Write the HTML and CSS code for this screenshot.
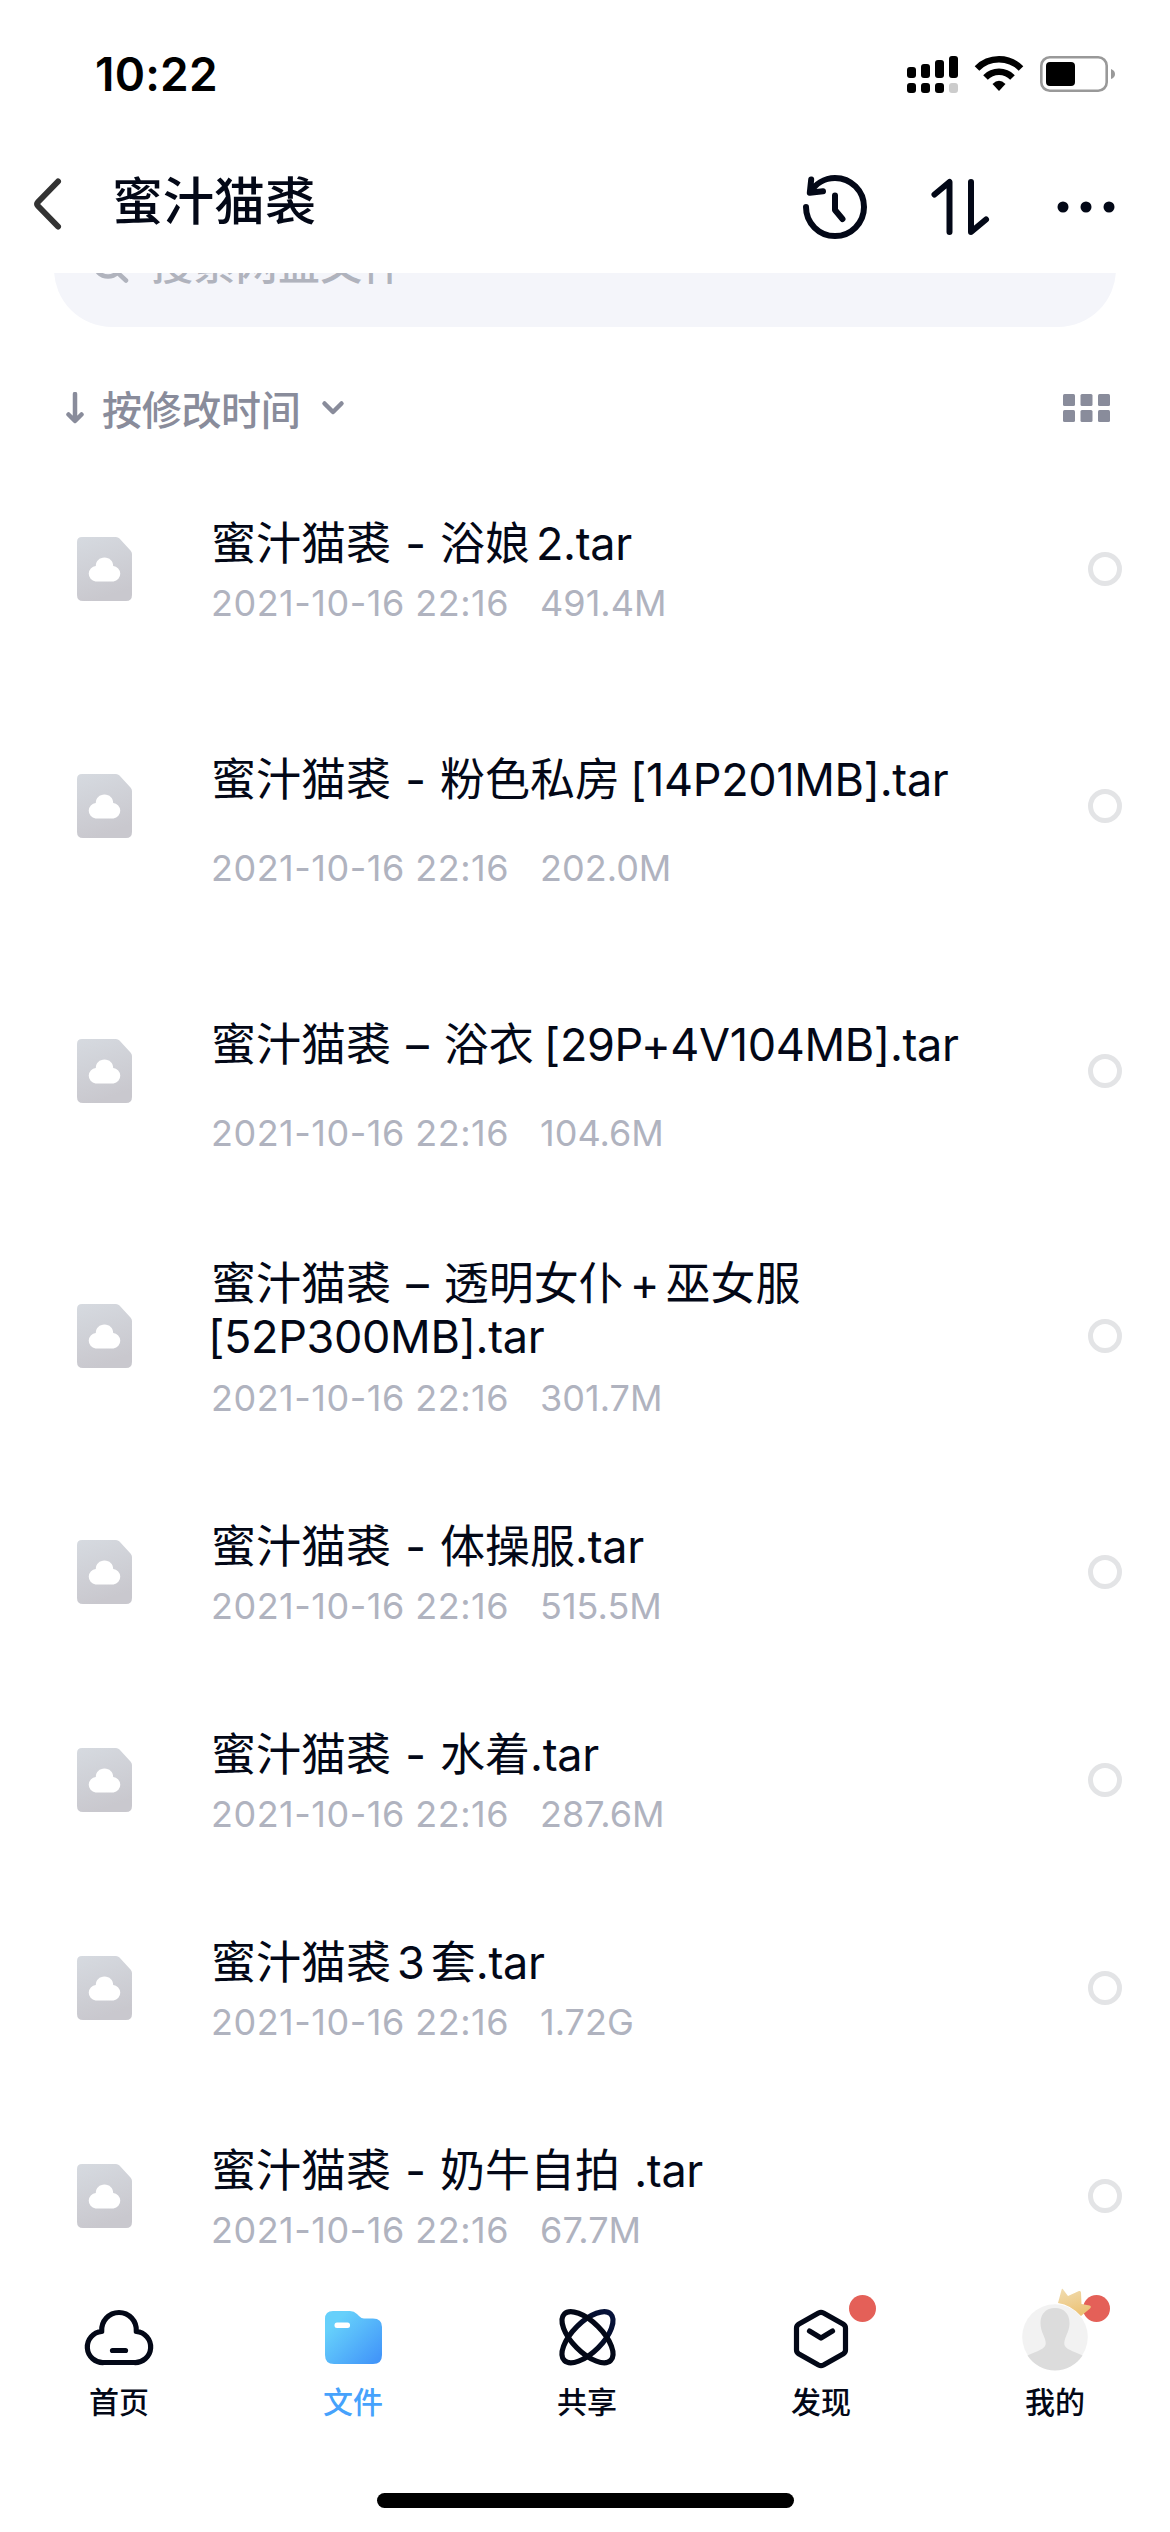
FILE: index.html
```html
<!DOCTYPE html>
<html lang="zh-CN">
<head>
  <meta charset="UTF-8">
  <title>蜜汁猫裘</title>
  <meta name="viewport" content="width=device-width, initial-scale=1.0">
  <link rel="stylesheet" href="styles.css">
</head>
<body>

  <!-- shared icons -->
  <svg class="defs" width="0" height="0">
    <defs>
      <linearGradient id="fileFill" x1="0" y1="0" x2="0.3" y2="1">
        <stop offset="0" stop-color="#d6dae0"/>
        <stop offset="1" stop-color="#c9c8ce"/>
      </linearGradient>
      <symbol id="file" viewBox="0 0 55 64">
        <path fill="url(#fileFill)" d="M5 0H39Q41 0 42.5 1.500L53.500 13.500Q55 15 55 17V58Q55 64 49 64H6Q0 64 0 58V5Q0 0 5 0Z"/>
        <path fill="#fff" d="M18.500 44.500A7.800 7.800 0 0 1 18.800 29C18.800 24 22.500 20.500 27.500 20.500S36.200 24 36.200 29A7.800 7.800 0 0 1 36.500 44.500Z"/>
      </symbol>
    </defs>
  </svg>

  <div class="status-bar">
    <span class="time">10:22</span>
    <svg class="status-icons" width="210" height="40" viewBox="0 0 210 40">
      <rect x="1" y="13" width="9" height="11" rx="3"/>
      <rect x="15" y="10" width="9" height="14" rx="3"/>
      <rect x="29" y="6" width="9" height="18" rx="3"/>
      <rect x="43" y="2" width="9" height="22" rx="3"/>
      <rect x="1" y="29" width="9" height="10" rx="3"/>
      <rect x="15" y="29" width="9" height="10" rx="3"/>
      <rect x="29" y="29" width="9" height="10" rx="3"/>
      <rect x="43" y="29" width="9" height="10" rx="3" fill="#ccc"/>
      <path fill="none" stroke="#000" stroke-width="6.500" d="M71 14.500A31 31 0 0 1 115 14.500M79.500 23.500A19 19 0 0 1 106.500 23.500"/>
      <path d="M86.500 30Q93 23.500 99.500 30L93 37Z"/>
      <rect x="135.300" y="3.300" width="65.400" height="33.400" rx="8.500" fill="none" stroke="#999" stroke-width="2.600"/>
      <rect x="140" y="8" width="29" height="24" rx="4"/>
      <path fill="#999" d="M205 15Q209 16.500 209 20T205 25Z"/>
    </svg>
  </div>

  <header>
    <svg class="back" width="30" height="56" viewBox="0 0 30 56">
      <path d="M25 5.500L5 26Q3 28 5 30L25 50.500"/>
    </svg>
    <h1>蜜汁猫裘</h1>
    <nav>
      <svg width="70" height="70" viewBox="0 0 70 70">
        <path d="M6 35A29 29 0 1 0 35 6C24 6 15 12.500 10 20.500M11.200 7.500L9.800 20.800L23 19.300M35 23.500V38L42.500 47"/>
      </svg>
      <svg width="60" height="70" viewBox="0 0 60 70">
        <path d="M4.500 22.500L19.500 10V60M41 10V60L56 47.500"/>
      </svg>
      <svg class="dots" width="60" height="70" viewBox="0 0 60 70">
        <circle cx="7" cy="35" r="5.500"/>
        <circle cx="30" cy="35" r="5.500"/>
        <circle cx="53" cy="35" r="5.500"/>
      </svg>
    </nav>
  </header>

  <main>
    <div class="search">
      <svg width="38" height="38" viewBox="0 0 38 38">
        <circle cx="16" cy="16" r="13.500"/>
        <path d="M26 26L34 33.500"/>
      </svg>
      <span>搜索网盘文件</span>
    </div>

    <div class="sort">
      <svg class="arrow" width="18" height="32" viewBox="0 0 18 32">
        <path d="M9 2V28M2.500 22.500L9 29L15.500 22.500"/>
      </svg>
      <span>按修改时间</span>
      <svg class="caret" width="24" height="16" viewBox="0 0 24 16">
        <path d="M3.500 3.500L12 12L20.500 3.500"/>
      </svg>
      <svg class="grid" width="48" height="28" viewBox="0 0 48 28">
        <rect width="12" height="12" rx="1.500"/>
        <rect x="17.500" width="12" height="12" rx="1.500"/>
        <rect x="35" width="12" height="12" rx="1.500"/>
        <rect y="16" width="12" height="12" rx="1.500"/>
        <rect x="17.500" y="16" width="12" height="12" rx="1.500"/>
        <rect x="35" y="16" width="12" height="12" rx="1.500"/>
      </svg>
    </div>

    <ul class="files">
      <li>
        <svg class="file-icon"><use href="#file"/></svg>
        <div class="info"><p class="name">蜜汁猫裘 - 浴娘<i></i><span>2.tar</span></p><p class="meta"><span class="date">2021-10-16 22:16</span><span>491.4M</span></p></div>
        <b class="check"></b>
      </li>
      <li class="tall">
        <svg class="file-icon"><use href="#file"/></svg>
        <div class="info"><p class="name single">蜜汁猫裘 - 粉色私房<i class="wide"></i><span>[14P201MB].tar</span></p><p class="meta"><span class="date">2021-10-16 22:16</span><span>202.0M</span></p></div>
        <b class="check"></b>
      </li>
      <li class="tall">
        <svg class="file-icon"><use href="#file"/></svg>
        <div class="info"><p class="name single dash">蜜汁猫裘 – 浴衣<i class="wide"></i><span>[29P+4V104MB].tar</span></p><p class="meta"><span class="date">2021-10-16 22:16</span><span>104.6M</span></p></div>
        <b class="check"></b>
      </li>
      <li class="tall">
        <svg class="file-icon"><use href="#file"/></svg>
        <div class="info"><p class="name dash">蜜汁猫裘 – 透明女仆<i></i>+<i></i>巫女服<br><span class="hang">[52P300MB].tar</span></p><p class="meta"><span class="date">2021-10-16 22:16</span><span>301.7M</span></p></div>
        <b class="check"></b>
      </li>
      <li>
        <svg class="file-icon"><use href="#file"/></svg>
        <div class="info"><p class="name">蜜汁猫裘 - 体操服<span>.tar</span></p><p class="meta"><span class="date">2021-10-16 22:16</span><span>515.5M</span></p></div>
        <b class="check"></b>
      </li>
      <li>
        <svg class="file-icon"><use href="#file"/></svg>
        <div class="info"><p class="name">蜜汁猫裘 - 水着<span>.tar</span></p><p class="meta"><span class="date">2021-10-16 22:16</span><span>287.6M</span></p></div>
        <b class="check"></b>
      </li>
      <li>
        <svg class="file-icon"><use href="#file"/></svg>
        <div class="info"><p class="name">蜜汁猫裘<i></i>3<i></i>套<span>.tar</span></p><p class="meta"><span class="date">2021-10-16 22:16</span><span>1.72G</span></p></div>
        <b class="check"></b>
      </li>
      <li>
        <svg class="file-icon"><use href="#file"/></svg>
        <div class="info"><p class="name">蜜汁猫裘 - 奶牛自拍 <span>.tar</span></p><p class="meta"><span class="date">2021-10-16 22:16</span><span>67.7M</span></p></div>
        <b class="check"></b>
      </li>
    </ul>
  </main>

  <footer>
    <div class="tabs">
      <a class="tab">
        <svg width="90" height="90" viewBox="0 0 90 90">
          <path d="M30 62.500A15.500 15.500 0 0 1 27.700 31.500C27 21 35 12.500 45 12.500S63 21 62.300 31.500A15.500 15.500 0 0 1 60 62.500Z"/>
          <path d="M38.500 50.500H51.500"/>
        </svg>
        <span>首页</span>
      </a>
      <a class="tab active">
        <svg width="90" height="90" viewBox="0 0 90 90">
          <defs>
            <linearGradient id="folder" x1="0.2" y1="0.2" x2="0.95" y2="0.9">
              <stop offset="0" stop-color="#66d0fb"/>
              <stop offset="1" stop-color="#4296f9"/>
            </linearGradient>
          </defs>
          <path class="solid" fill="url(#folder)" d="M25 11H42Q46 11 49 14L51 16Q53.500 18.500 56 18.500H65Q74 18.500 74 27V55Q74 64 65 64H26Q17 64 17 55V19Q17 11 25 11Z"/>
          <rect class="solid" x="26.500" y="22.500" width="15.500" height="5.500" rx="2.500" fill="#fff"/>
        </svg>
        <span>文件</span>
      </a>
      <a class="tab">
        <svg width="90" height="90" viewBox="0 0 90 90">
          <defs>
            <linearGradient id="orbit" x1="0" y1="0" x2="1" y2="0">
              <stop offset="0.3" stop-color="#030817"/>
              <stop offset="1" stop-color="#06123a"/>
            </linearGradient>
          </defs>
          <ellipse cx="45.500" cy="37.200" rx="32.800" ry="15" transform="rotate(-45 45.500 37.200)" stroke="url(#orbit)"/>
          <ellipse cx="45.500" cy="37.200" rx="32.800" ry="15" transform="rotate(45 45.500 37.200)"/>
        </svg>
        <span>共享</span>
      </a>
      <a class="tab">
        <svg width="90" height="90" viewBox="0 0 90 90">
          <path d="M42.500 13Q45 11.800 47.500 13L67 24Q69.500 25.500 69.500 28V50Q69.500 52.500 67 54L47.500 65Q45 66.200 42.500 65L23 54Q20.500 52.500 20.500 50V28Q20.500 25.500 23 24Z"/>
          <path d="M33.500 31L45 38L56.500 31"/>
        </svg>
        <em class="badge"></em>
        <span>发现</span>
      </a>
      <a class="tab">
        <em class="badge"></em>
        <svg class="avatar" width="90" height="90" viewBox="0 0 90 90">
          <defs>
            <linearGradient id="crown" x1="0" y1="0" x2="0.4" y2="1">
              <stop offset="0" stop-color="#f1ddb2"/>
              <stop offset="1" stop-color="#ecc377"/>
            </linearGradient>
          </defs>
          <circle cx="45" cy="37" r="32.800" fill="#f2f2f2"/>
          <path fill="#dcdcdc" d="M45 8C36 8 30.500 14 30.500 23C30.500 30 33 33 35 39C37 46 35 47.500 28 51Q20 54 17.500 55.500A32.800 32.800 0 0 0 72.500 55.500Q70 54 62 51C55 47.500 53 46 55 39C57 33 59.500 30 59.500 23C59.500 14 54 8 45 8Z"/>
          <path fill="url(#crown)" d="M51.500 -10Q52.200 -12.500 53.500 -10L58 -4L69 -9Q71 -9.500 71 -7.500L71.500 4L79.500 5.500Q82 6.500 80 8.500L71 16Q61 5 48 3Z"/>
        </svg>
        <span>我的</span>
      </a>
    </div>
    <div class="home-bar"></div>
  </footer>

</body>
</html>
```
FILE: styles.css
```css
* {
  box-sizing: border-box;
}
body {
  font-family: Inter, 'Noto Sans CJK SC', sans-serif;
  margin: 0;
  width: 1170px;
  height: 2532px;
  overflow: hidden;
  background: #fff;
  color: #030817;
  display: flex;
  flex-direction: column;
}
h1, p, ul {
  margin: 0;
  padding: 0;
}
svg {
  display: block;
  flex: none;
}
.defs {
  position: absolute;
}

/* status bar */
.status-bar {
  height: 141px;
  flex: none;
  padding: 54px 54px 0 95px;
  display: flex;
  justify-content: space-between;
  align-items: flex-start;
  color: #000;
}
.time {
  font-size: 46px;
  font-weight: 600;
  line-height: 40px;
  letter-spacing: 0.2px;
}

/* header */
header {
  height: 132px;
  flex: none;
  padding: 0 54px 0 33px;
  display: flex;
  align-items: center;
}
header h1 {
  font-size: 51px;
  font-weight: 500;
  line-height: 60px;
  margin: 0 auto 10px 49px;
}
header svg {
  fill: none;
  stroke: #030817;
  stroke-width: 6;
  stroke-linecap: round;
  stroke-linejoin: round;
}
header .back {
  stroke: #333;
  margin-bottom: 6px;
}
header nav {
  display: flex;
}
header nav svg + svg {
  margin-left: 60px;
}
header nav .dots {
  fill: #030817;
  stroke: none;
  margin-left: 66px;
}

/* list */
main {
  flex: 1;
  overflow: hidden;
}
.search {
  height: 116px;
  margin: -62px 54px 0;
  padding: 0 0 16px 38px;
  border-radius: 58px;
  background: #f4f5fa;
  color: #b0b3bd;
  display: flex;
  align-items: center;
}
.search svg {
  margin-top: 10px;
  fill: none;
  stroke: #b0b3bd;
  stroke-width: 4.5;
  stroke-linecap: round;
}
.search span {
  font-size: 42px;
  font-weight: 500;
  letter-spacing: 0.3px;
  margin-left: 21px;
}
.sort {
  height: 138px;
  padding: 24px 59px 0 66px;
  display: flex;
  align-items: center;
  color: #898c9b;
  font-size: 40px;
  font-weight: 500;
}
.sort span {
  margin-left: 18px;
  letter-spacing: -0.3px;
}
.sort .arrow, .sort .caret {
  fill: none;
  stroke: #898c9b;
  stroke-width: 4.5;
  stroke-linecap: round;
  stroke-linejoin: round;
}
.sort .caret {
  margin-left: 20px;
}
.sort .grid {
  fill: #898c9b;
  margin-left: auto;
}
.files {
  list-style: none;
}
.files li {
  height: 208px;
  padding: 0 48px 0 77px;
  display: flex;
  align-items: center;
}
.files .tall {
  height: 265px;
}
.file-icon {
  width: 55px;
  height: 64px;
}
.info {
  flex: 1;
  align-self: flex-start;
  padding: 52px 0 0 79px;
}
.name {
  height: 53px;
  font-size: 45px;
  line-height: 53px;
  word-spacing: 1.5px;
  white-space: nowrap;
}
.name i {
  display: inline-block;
  width: 6px;
}
.name .wide {
  width: 10px;
}
.name span {
  letter-spacing: -0.35px;
}
.name .hang {
  margin-left: -3px;
}
.dash {
  word-spacing: 2.5px;
}
.meta {
  margin-top: 9px;
  font-size: 36px;
  line-height: 48px;
  color: #b0b3bf;
  display: flex;
  gap: 31px;
}
.date {
  letter-spacing: 0.5px;
}
.tall .info {
  padding-top: 54px;
}
.tall .name {
  height: 106px;
}
.tall .single {
  line-height: 106px;
}
.tall .meta {
  margin-top: 11px;
}
.check {
  width: 34px;
  height: 34px;
  border: 5px solid #e3e4e6;
  border-radius: 50%;
}

/* bottom tabs */
footer {
  height: 262px;
  flex: none;
  background: #fff;
}
.tabs {
  height: 223px;
  padding: 30px 0 0 2px;
  display: flex;
}
.tab {
  width: 234px;
  flex: none;
  position: relative;
  display: flex;
  flex-direction: column;
  align-items: center;
  font-size: 30px;
  font-weight: 500;
  line-height: 40px;
}
.tab svg {
  fill: none;
  stroke: #030817;
  stroke-width: 5.2;
  stroke-linecap: round;
  stroke-linejoin: round;
  overflow: visible;
}
.tab svg .solid, .tab .avatar {
  stroke: none;
}
.tab span {
  margin-top: -8px;
}
.active {
  color: #46a2fc;
}
.badge {
  position: absolute;
  top: -5px;
  left: 145px;
  width: 27px;
  height: 27px;
  border-radius: 50%;
  background: #e46058;
}
.avatar {
  position: relative;
}
.home-bar {
  width: 417px;
  height: 15px;
  margin: 0 auto;
  border-radius: 8px;
  background: #000;
}
```
